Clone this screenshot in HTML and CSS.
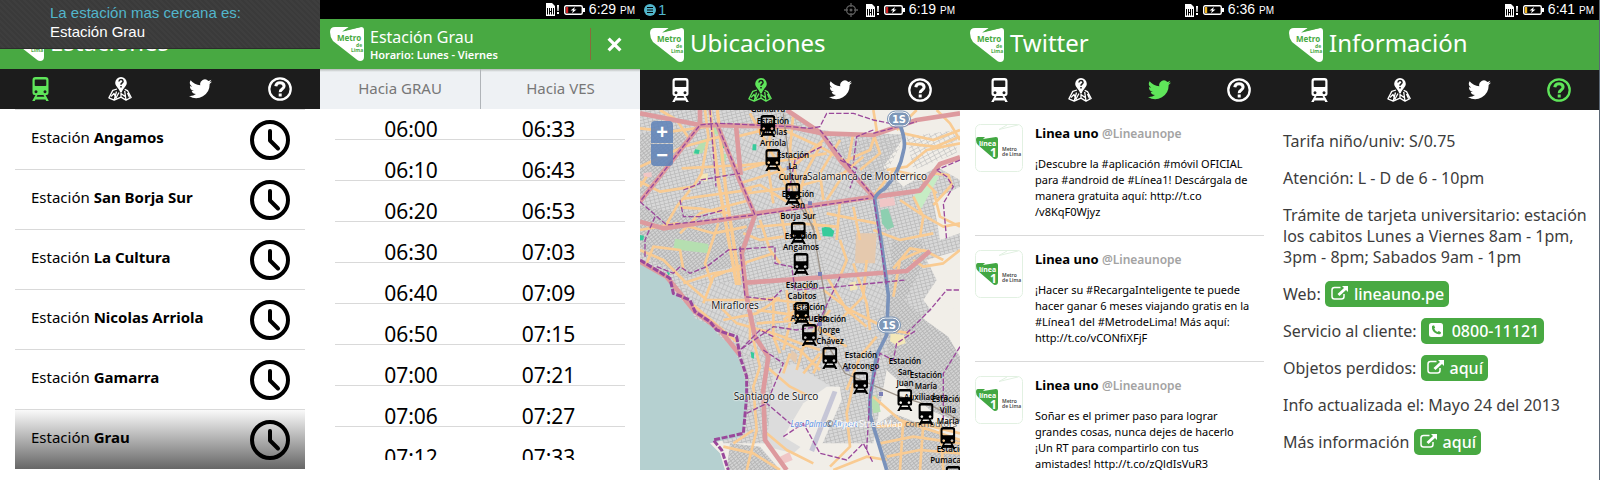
FILE: index.html
```html
<!DOCTYPE html>
<html lang="es">
<head>
<meta charset="utf-8">
<title>Metro de Lima</title>
<link rel="stylesheet" href="styles.css">
</head>
<body>
<svg class="defs" aria-hidden="true">
  <symbol id="train" viewBox="0 0 17 24">
    <path fill-rule="evenodd" d="M3.500 0h10a3 3 0 0 1 3 3v13a2 2 0 0 1-2 2h-1l3.300 6h-2.600l-.7-1.400h-10L2.800 24H.2l3.300-6h-1a2 2 0 0 1-2-2V3a3 3 0 0 1 3-3zM3.500 2.600q-.8 0-.8.8v4.800q0 .8.8.8h10q.8 0 .8-.8V3.400q0-.8-.8-.8zM4 13.300a1.500 1.500 0 1 0 .01 0zM13 13.300a1.500 1.500 0 1 0 .01 0zM5.500 18l-.9 1.700h7.800l-.9-1.700z"/>
  </symbol>
  <symbol id="place" viewBox="0 0 24 24">
    <path d="M13 0a5.800 5.800 0 0 0-5.800 5.800C7.200 9.400 10.500 10.500 12.300 15.500h1.400C15.500 10.500 18.800 9.400 18.800 5.800A5.800 5.800 0 0 0 13 0z"/>
    <path fill="none" stroke="#1c1c1c" stroke-width="1.500" d="M10.900 4.500q.2-1.900 2.100-1.900t2.100 1.700q0 1.100-1.100 1.700t-1 1.700M13 9v1.500"/>
    <path fill="none" stroke="currentColor" stroke-width="1.300" stroke-linejoin="round" d="M9 12L4.800 13.400.9 20.800l5.300 2.300 6.800-3 5 3 5.200-2.600-3.700-6.900-2.800-1.200M6.200 23l2.300-8.500M18 23l-1.300-9M3 19.500l3-3 2 4.500 3-5.500M13 20v-3.500l4 3M19.500 16l2 4.500"/>
  </symbol>
  <symbol id="bird" viewBox="0 0 24 20">
    <path d="M24 2.300a9.800 9.800 0 0 1-2.800.8A4.900 4.900 0 0 0 23.300.4a9.900 9.900 0 0 1-3.100 1.200 4.900 4.900 0 0 0-8.400 4.500A14 14 0 0 1 1.700.9a4.900 4.900 0 0 0 1.500 6.600 4.900 4.900 0 0 1-2.200-.6 4.900 4.900 0 0 0 3.900 4.900 4.900 4.900 0 0 1-2.200.1 4.900 4.900 0 0 0 4.600 3.400A9.900 9.900 0 0 1 0 17.300 14 14 0 0 0 21.500 4.900 10 10 0 0 0 24 2.300z"/>
  </symbol>
  <symbol id="help" viewBox="0 0 24 24">
    <g fill="none" stroke="currentColor"><circle cx="12" cy="12" r="10.700" stroke-width="2.300"/>
    <path stroke-width="3" d="M7.800 9.200Q8.200 5.800 12 5.800t4.100 3.200q0 1.900-2 3.100t-1.900 3M12.200 16.500v3"/></g>
  </symbol>
  <symbol id="clock" viewBox="0 0 40 40">
    <g fill="none" stroke="#000" stroke-width="4"><circle cx="20" cy="20" r="18"/><path stroke-linecap="round" stroke-linejoin="round" d="M20 11v9.500l8 8"/></g>
  </symbol>
  <symbol id="logo" viewBox="0 0 34 34">
    <path fill="#fff" d="M5 0H19L13 4 31 0q3 0 3 3V30q0 4-4 4-2 0-4-2L3 14Q0 10 0 5 0 0 5 0z"/>
    <path fill="#48a942" d="M19 0L12 4.800 31 0z"/>
    <text x="7" y="14" class="logo-name">Metro</text><text x="26" y="20" class="logo-sub">de</text><text x="21" y="25" class="logo-sub">Lima</text>
  </symbol>
  <symbol id="avatar" viewBox="0 0 48 48">
    <rect x=".5" y=".5" width="47" height="47" rx="5" fill="#fff" stroke="#e2f1e2"/>
    <path fill="none" stroke="#e2f1e2" d="M32 1l-8 4.500L43 1"/>
    <path fill="#42a742" d="M3 13h7l-2 2 13-2q2 0 2 2v17q0 3-3 3-1 0-2-1L3 21q-2-2-2-5 0-3 2-3z"/>
    <text x="4" y="22" class="avatar-line">línea</text><text x="15" y="33" class="avatar-one">1</text>
    <text x="27" y="27" class="avatar-text">Metro</text><text x="27" y="32" class="avatar-text">de Lima</text>
  </symbol>
  <symbol id="sim" viewBox="0 0 14 13">
    <path fill="#fff" d="M0 0h6l3 3v10H0z"/><path stroke="#000" fill="none" d="M1.500 5v6.500M3.500 5v6.500M5.500 5v6.500M7.500 5v6.500M3.500 8.500h2"/><path fill="#fff" d="M11 2h2l-.4 6h-1.200zM11 9h2v2h-2z"/>
  </symbol>
  <symbol id="battery" viewBox="0 0 21 10">
    <rect x=".7" y=".7" width="17.600" height="8.600" rx="1.500" fill="none" stroke="#fff" stroke-width="1.400"/><path fill="#fff" d="M19 3h2v4h-2zM11 2L6.500 5.500H9L8 8.200l4.500-3.700H10z"/><path fill="currentColor" d="M2 2h2.200v6H2z"/>
  </symbol>
  <symbol id="external" viewBox="0 0 17 14">
    <path fill="none" stroke="currentColor" stroke-width="1.500" d="M9.500 1.500H3.500q-2.500 0-2.500 2.500v6.500Q1 13 3.500 13h7q2.500 0 2.500-2.500V8"/><path d="M11 0h6v6l-2-2-6.500 6L6.500 8 13 2z"/>
  </symbol>
  <symbol id="phone" viewBox="0 0 14 14">
    <path fill-rule="evenodd" d="M2.500 0h9Q14 0 14 2.500v9q0 2.500-2.500 2.500h-9Q0 14 0 11.500v-9Q0 0 2.500 0zM3 3q-.5 4 2.500 6.500T11.500 11l.5-1.700-2.300-1.300-1 1Q6 8 5.200 5.500l1-.8L5 2.200z"/>
  </symbol>
</svg>

<main class="board">
  <section class="screen">
    <div class="toast" role="status"><span class="toast-title">La estación mas cercana es:</span><span>Estación Grau</span></div>
    <div class="statusbar statusbar-short"></div>
    <header class="header"><svg class="logo"><use href="#logo"/></svg><h1 class="title">Estaciones</h1></header>
    <nav class="nav">
      <a href="#estaciones" class="nav-link active" aria-label="Estaciones"><svg class="i-train"><use href="#train"/></svg></a>
      <a href="#mapa" class="nav-link" aria-label="Ubicaciones"><svg class="i-square"><use href="#place"/></svg></a>
      <a href="#twitter" class="nav-link" aria-label="Twitter"><svg class="i-bird"><use href="#bird"/></svg></a>
      <a href="#info" class="nav-link" aria-label="Información"><svg class="i-square"><use href="#help"/></svg></a>
    </nav>
    <ul class="stations">
      <li class="station"><span>Estación <b>Angamos</b></span><svg class="clock"><use href="#clock"/></svg></li>
      <li class="station"><span>Estación <b>San Borja Sur</b></span><svg class="clock"><use href="#clock"/></svg></li>
      <li class="station"><span>Estación <b>La Cultura</b></span><svg class="clock"><use href="#clock"/></svg></li>
      <li class="station"><span>Estación <b>Nicolas Arriola</b></span><svg class="clock"><use href="#clock"/></svg></li>
      <li class="station"><span>Estación <b>Gamarra</b></span><svg class="clock"><use href="#clock"/></svg></li>
      <li class="station pressed"><span>Estación <b>Grau</b></span><svg class="clock"><use href="#clock"/></svg></li>
    </ul>
  </section>

  <section class="screen">
    <div class="statusbar statusbar-short"><svg class="sim"><use href="#sim"/></svg><svg class="battery low"><use href="#battery"/></svg><span class="time">6:29 <small>PM</small></span></div>
    <header class="header"><svg class="logo"><use href="#logo"/></svg>
      <div class="heading"><h1 class="subtitle">Estación Grau</h1><p class="hours">Horario: Lunes - Viernes</p></div>
      <button class="close" aria-label="Cerrar"><svg class="cross" viewBox="0 0 14 14"><path d="M1.500 1.500l11 11M12.500 1.500l-11 11"/></svg></button>
    </header>
    <div class="tabs"><button class="tab">Hacia GRAU</button><button class="tab">Hacia VES</button></div>
    <div class="schedule">
      <table class="times">
        <tr><td>06:00</td><td>06:33</td></tr>
        <tr><td>06:10</td><td>06:43</td></tr>
        <tr><td>06:20</td><td>06:53</td></tr>
        <tr><td>06:30</td><td>07:03</td></tr>
        <tr><td>06:40</td><td>07:09</td></tr>
        <tr><td>06:50</td><td>07:15</td></tr>
        <tr><td>07:00</td><td>07:21</td></tr>
        <tr><td>07:06</td><td>07:27</td></tr>
        <tr><td>07:12</td><td>07:33</td></tr>
      </table>
    </div>
  </section>

  <section class="screen">
    <div class="statusbar">
      <span class="notice"><svg class="bubble" viewBox="0 0 12 12"><circle cx="6" cy="6" r="6" fill="#52b6cc"/><path stroke="#000" d="M3 3.500h6M3 6h6M3 8.500h6"/></svg>1</span>
      <svg class="gps" viewBox="0 0 14 14"><g fill="none" stroke="#5c5c5c" stroke-width="1.300"><circle cx="7" cy="7" r="4.500"/><path d="M7 0v4M7 10v4M0 7h4M10 7h4"/></g><circle cx="7" cy="7" r="1.500" fill="#5c5c5c"/></svg>
      <svg class="sim"><use href="#sim"/></svg><svg class="battery low"><use href="#battery"/></svg><span class="time">6:19 <small>PM</small></span></div>
    <header class="header"><svg class="logo"><use href="#logo"/></svg><h1 class="title">Ubicaciones</h1></header>
    <nav class="nav">
      <a href="#estaciones" class="nav-link" aria-label="Estaciones"><svg class="i-train"><use href="#train"/></svg></a>
      <a href="#mapa" class="nav-link active" aria-label="Ubicaciones"><svg class="i-square"><use href="#place"/></svg></a>
      <a href="#twitter" class="nav-link" aria-label="Twitter"><svg class="i-bird"><use href="#bird"/></svg></a>
      <a href="#info" class="nav-link" aria-label="Información"><svg class="i-square"><use href="#help"/></svg></a>
    </nav>
    <div class="map">
      <svg class="tiles" viewBox="0 330 960 1080" preserveAspectRatio="xMinYMin slice" aria-hidden="true">
        <defs>
          <pattern id="blocks-a" width="13" height="10" patternUnits="userSpaceOnUse" patternTransform="rotate(-14)"><rect width="13" height="10" fill="#d8d8d8"/><path d="M0 1h13M1 0v10" stroke="#bababa" stroke-width="2.500"/></pattern>
          <pattern id="blocks-b" width="12" height="15" patternUnits="userSpaceOnUse" patternTransform="rotate(24)"><rect width="12" height="15" fill="#d8d8d8"/><path d="M0 1h12M1 0v15" stroke="#bababa" stroke-width="2.500"/></pattern>
          <pattern id="blocks-c" width="11" height="8" patternUnits="userSpaceOnUse" patternTransform="rotate(-38)"><rect width="11" height="8" fill="#d3d3d3"/><path d="M0 1h11M1 0v8" stroke="#b6b6b6" stroke-width="3"/></pattern>
          <pattern id="blocks-d" width="16" height="11" patternUnits="userSpaceOnUse" patternTransform="rotate(-28)"><path d="M0 1h16M1 0v11" stroke="#bdbdbd" stroke-width="2"/></pattern>
        </defs>
        <path fill="#f1eee8" d="M0 330h960v1080H0z"/>
        <path fill="url(#blocks-a)" d="M0 330h440l100 60 160 10 260 10v480l-100 50-100 60-60 330H250L0 780z"/>
        <path fill="url(#blocks-b)" d="M240 380l310 20 150 190-350 50zM130 860l190-20 60 260-110-60zM540 720h180l20 220-160-60z"/>
        <path fill="url(#blocks-c)" d="M0 400l170-10L0 590zM755 720h90l10 60-60 120 60 60 70 50 35 60v200l-90-40-130-120 10-200zM0 620l340 50-30 120-180 40L0 760zM700 1280l60-40 200 80v90H740zM270 1330l90 10 60 70H260z"/>
        <path fill="#f1eee8" d="M540 330h200l-50 70-120 5zM800 400l80-40 80 60v120l-70-40-100 60-60-60zM860 780l100-30v170l-80 20-30-40 40-60zM880 600l80-40v140l-60 20z"/>
        <path fill="url(#blocks-d)" d="M570 440l180-30 30 30-70 130-70-30zM800 410l150-20v70l-130 50z"/>
        <path fill="#dcdcdc" d="M400 1110l60-20 130 80-40 110-90 80-80-20z"/>
        <path fill="#f1eee8" d="M560 1160h40l5 40-75 170-100-60 60-100z"/>
        <path fill="#e5c9ae" d="M648 700h62l-5 90h-60zM455 1050l18 15-6 25-17-15z"/>
        <path fill="#b5dfb0" d="M105 716l100 16 0 28-105-12zM160 455l30-38 12 2-14 40-28 6zM215 380l22 5-4 20-14-4zM240 460l20 2-4 22-16-2zM690 1190l20-5 12 50-22 5z"/>
        <path fill="#c6ecc4" d="M820 590l50-62 28 0-58 104z"/>
        <path fill="#8dcfb0" d="M722 630l22-5 18 55-20 10-16-20z"/>
        <path fill="#36cb9b" d="M545 684l20-6 18 16-5 16-30-2zM165 448l14 2-3 12-14-2zM242 425l14 4-4 16-12-4zM338 433l11 0v18h-12zM332 1055l10 3v18l-8-3zM80 815l10 3-4 10zM0 705l12 2-2 14-10 0z"/>
        <path fill="#f3e7b8" d="M752 1000l40 5 5 25-25 8-22-15zM628 848l20-4 5 24-22 4zM178 522l26-2-2 24-22-2z"/>
        <path fill="#f0c6c6" d="M718 598l44-6 4 24-46 6zM420 1370l28-14 10 24-30 12zM10 520l24-4 2 14-24 4z"/>
        <path fill="#b5d0d0" d="M0 790l90 55 10 35 50 40 15 35 45 20 30 35 40 30 20 50 10 30 15 50-5 50-10 60-10 30-90 20 30 30 15 50H0z"/>
        <path fill="#c6c6d6" d="M578 1172l14 4-70 180-14-6z"/>
        <g fill="none" stroke="#f9cb92" stroke-width="8" stroke-linejoin="round">
          <path stroke-width="10" d="M210 330l25 215 55 310M232 330l26 245 42 280"/>
          <path d="M0 545l60 30 100-15 25-40 20-110-10-80M125 505l185-10M125 597l210-28M120 622l60 4 90 14M310 510l80-25 20 15 30 60M300 570l60-15 80 50M70 690l40-70 40-50M235 670l-40 120 20 60M360 660l30 90 30 40M310 790l90-30M310 700l50 20 70-10M20 790l20-50 80 10 10 60"/>
          <path d="M60 330l50 30 40 60M0 385l90 10 150-20M0 500l130-60 110-30M0 560l20-30M120 700l60-60 150-40M0 690l110-20 110 30 100-20M330 340l60 110 70 120 50 80M290 410l120-30 130 60 70 40M280 500l160-20 120-20M300 550l160-50 90-80M320 580l150-20 140-40 60-50M400 350l-20 120 20 140M460 340l-10 110 30 130M545 430l-50 90-20 80M600 420l-60 100 10 80M640 400l-20 110-60 90M700 330l10 60-20 60-90 40M700 400l20 60-60 50M760 360l30 40 90 20 80-30M830 330l-60 60M890 330l40 40 30 50M795 430l90 10 75-30M740 510l60-10 60-50 100-20M700 590l60-80 80 20 50 50M820 590l30 60-10 60M780 600l60 40 70 40 50-10M880 570l20 80 60 30M880 520l45 5 10 30-55 60M640 620l20 100M600 600l-10 120M420 630l20 90M510 620l30 100M560 640l150 30M700 690l80 30 100-20M350 680l130-10 110 10"/>
          <path d="M0 750l70 30 60 60 70 60 120 0 100-5M190 910l30-80 100-40M130 850l90-30 95-15M230 910l60 60 110 30 80 30 60 20M250 960l100-20 60-40 80 10M160 915l130 110M330 900v120M350 930l150 20M350 970l140-10 70 40 60 40M400 890v120l20 50M440 870l10 100-20 80M500 850l-10 60-60 50M550 870l80 60 120 60 60 10M570 930l-60 80-30 50M600 830l20-50-20-60M560 830l60 100 60 50M640 790l40 120 10 80M680 780l-10 110-60 60M760 890l20-110 70-30 60 30M870 755l-60-10-50 60M820 780l30 20 60-10 50-40M400 1010l80 40 60 60M450 1060l-20 60M490 1040l-20 70M540 1060l-50 60M560 1040l-40 80M340 1020l20 80-20 60 10 130-30 120M380 1100l70 60 60 30M640 1150l-20 90 10 100-60 60M700 1190l80 70 180 60M710 1280l130-10 120 30M720 1330l100-20 140 20M740 1370l100-20 120 10M790 1260l-10 150M850 1270l-10 140M900 1270l10 140M380 1300l60 50 80 40M280 1330l60-40M250 1340l90 20 80 50M580 1410l100-40 60 10M710 1010l-50 60-40 100"/>
        </g>
        <g fill="none" stroke="#dd9a9e" stroke-width="14" stroke-linejoin="round">
          <path d="M0 340l180 35 270 5 95 20 155 5 130-45 130-20M0 605l180-230v-45M230 370l70 175 45 100M288 375l14 150M0 665l70 20 270-40M345 645l-40 115 15 130 25 120 40 60-15 100 5 150 65 90M350 640l340-48 150-20 60-80 60-20M440 330l105 70 55 80 105 115M320 848l280-20 200-15 70-60M0 785l80 45 85 105 75 55 60 75"/>
        </g>
        <g fill="none" stroke="#9d9389" stroke-width="4"><path d="M430 340l30 250 60 90 10 70 30 170-25 70 80 130 165 70 100 30 115 60M445 500l75 190"/></g>
        <g fill="none" stroke="#7992bb" stroke-width="11"><path d="M780 375q20 50 10 80-10 60-55 110-35 20-30 40l20 130 20 150-5 120-30 60-20 130v50l50 165"/></g>
        <g fill="none" stroke="#9a489b" stroke-width="4" stroke-dasharray="16 6">
          <path d="M0 605l80 70 265-30-115-275-50 5L0 605M120 600l10 50h50l70-20M130 570l50-20v-10l120-20M350 645l335-50M210 330l18 230M240 370l210 10 60 5 30-5 20-40h80l60 20 50 10M540 390l80 100 80 100 20 130 20 140M600 480l50 25-20 60M545 440l-80 40-20 100M700 390l-50 20-10 80M960 480l-70 30M890 510l30 20 20 30-30 50 10 110M15 770l0-50 30-70M50 800l50 20 20-20 30 20 50-20 65-50 140-10v50l50 10 10 70 130-10 200-20M600 830l-70 150-60 10-70-10-100 70M300 740l15 150 80 10 30-30M400 1010l-40-20-60 60M370 1050l60 40-50 120 70 60 60 10M320 1240l60-30M430 1310l60-40 50 90 80 20 50-50 30 60M680 1350l10-170 30-120 40 20 10-50 60-40M800 1000l70-70 50-60 40 0M960 1040l-50 80 0 140M700 400l130-35"/>
        </g>
        <path fill="none" stroke="#9a489b" stroke-width="9" stroke-dasharray="18 5" d="M0 780l90 55 10 45 50 20 15 35 45 30 20 25 60 20 10 60 20 60v60l-10 110-90 20 25 30 20 60"/>
        <g fill="#7b80b8"><path d="M440 498h12v12h-12zM504 604h12v12h-12zM534 816h12v12h-12zM534 966h12v12h-12zM616 1102h12v12h-12zM717 1176h12v12h-12z"/></g>
      </svg>
      <span class="place" style="left:227px;top:66px">Salamanca de Monterrico</span>
      <span class="place" style="left:95px;top:195px">Miraflores</span>
      <span class="place" style="left:136px;top:286px">Santiago de Surco</span>
      <span class="place airport" style="left:184px;top:314px">Las Palmas Airport</span>
      <span class="shield" style="left:259px;top:9px">1S</span>
      <span class="shield" style="left:249px;top:215px">1S</span>
      <small class="credit">© <a href="#osm">OpenStreetMap</a> contributors</small>
      <div class="pin" style="left:128px;top:27px">Estación<br>Gamarra<svg class="marker"><use href="#train"/></svg></div>
      <div class="pin" style="left:133px;top:61px">Estación<br>Nicolas<br>Arriola<svg class="marker"><use href="#train"/></svg></div>
      <div class="pin" style="left:153px;top:95px">Estación<br>La<br>Cultura<svg class="marker"><use href="#train"/></svg></div>
      <div class="pin" style="left:158px;top:134px">Estación<br>San<br>Borja Sur<svg class="marker"><use href="#train"/></svg></div>
      <div class="pin" style="left:161px;top:165px">Estación<br>Angamos<svg class="marker"><use href="#train"/></svg></div>
      <div class="pin" style="left:162px;top:214px">Estación<br>Cabitos<svg class="marker"><use href="#train"/></svg></div>
      <div class="pin" style="left:169px;top:236px">Estación<br>Ayacucho<svg class="marker"><use href="#train"/></svg></div>
      <div class="pin" style="left:190px;top:259px">Estación<br>Jorge<br>Chávez<svg class="marker"><use href="#train"/></svg></div>
      <div class="pin" style="left:221px;top:284px">Estación<br>Atocongo<svg class="marker"><use href="#train"/></svg></div>
      <div class="pin" style="left:265px;top:301px">Estación<br>San<br>Juan<svg class="marker"><use href="#train"/></svg></div>
      <div class="pin" style="left:286px;top:315px">Estación<br>María<br>Auxiliadora<svg class="marker"><use href="#train"/></svg></div>
      <div class="pin" style="left:308px;top:339px">Estación<br>Villa<br>María<svg class="marker"><use href="#train"/></svg></div>
      <div class="pin" style="left:313px;top:378px">Estación<br>Pumacahua<svg class="marker"><use href="#train"/></svg></div>
      <div class="zoom"><button class="zoom-button" aria-label="Acercar">+</button><button class="zoom-button" aria-label="Alejar">−</button></div>
    </div>
  </section>

  <section class="screen">
    <div class="statusbar"><svg class="sim"><use href="#sim"/></svg><svg class="battery"><use href="#battery"/></svg><span class="time">6:36 <small>PM</small></span></div>
    <header class="header"><svg class="logo"><use href="#logo"/></svg><h1 class="title">Twitter</h1></header>
    <nav class="nav">
      <a href="#estaciones" class="nav-link" aria-label="Estaciones"><svg class="i-train"><use href="#train"/></svg></a>
      <a href="#mapa" class="nav-link" aria-label="Ubicaciones"><svg class="i-square"><use href="#place"/></svg></a>
      <a href="#twitter" class="nav-link active" aria-label="Twitter"><svg class="i-bird"><use href="#bird"/></svg></a>
      <a href="#info" class="nav-link" aria-label="Información"><svg class="i-square"><use href="#help"/></svg></a>
    </nav>
    <div class="feed">
      <article class="tweet"><svg class="avatar"><use href="#avatar"/></svg><div><h2 class="author">Linea uno <span class="handle">@Lineaunope</span></h2>
        <p class="message">¡Descubre la #aplicación #móvil OFICIAL<br>para #android de #Línea1! Descárgala de<br>manera gratuita aquí: http://t.co<br>/v8KqF0Wjyz</p></div></article>
      <article class="tweet"><svg class="avatar"><use href="#avatar"/></svg><div><h2 class="author">Linea uno <span class="handle">@Lineaunope</span></h2>
        <p class="message">¡Hacer su #RecargaInteligente te puede<br>hacer ganar 6 meses viajando gratis en la<br>#Línea1 del #MetrodeLima! Más aquí:<br>http://t.co/vCONfiXFjF</p></div></article>
      <article class="tweet"><svg class="avatar"><use href="#avatar"/></svg><div><h2 class="author">Linea uno <span class="handle">@Lineaunope</span></h2>
        <p class="message">Soñar es el primer paso para lograr<br>grandes cosas, nunca dejes de hacerlo<br>¡Un RT para compartirlo con tus<br>amistades! http://t.co/zQldIsVuR3</p></div></article>
    </div>
  </section>

  <section class="screen screen-last">
    <div class="statusbar"><svg class="sim"><use href="#sim"/></svg><svg class="battery"><use href="#battery"/></svg><span class="time">6:41 <small>PM</small></span></div>
    <header class="header"><svg class="logo"><use href="#logo"/></svg><h1 class="title">Información</h1></header>
    <nav class="nav">
      <a href="#estaciones" class="nav-link" aria-label="Estaciones"><svg class="i-train"><use href="#train"/></svg></a>
      <a href="#mapa" class="nav-link" aria-label="Ubicaciones"><svg class="i-square"><use href="#place"/></svg></a>
      <a href="#twitter" class="nav-link" aria-label="Twitter"><svg class="i-bird"><use href="#bird"/></svg></a>
      <a href="#info" class="nav-link active" aria-label="Información"><svg class="i-square"><use href="#help"/></svg></a>
    </nav>
    <div class="info">
      <p>Tarifa niño/univ: S/0.75</p>
      <p>Atención: L - D de 6 - 10pm</p>
      <p>Trámite de tarjeta universitario: estación<br>los cabitos Lunes a Viernes 8am - 1pm,<br>3pm - 8pm; Sabados 9am - 1pm</p>
      <p>Web: <a class="pill" href="#web"><svg class="i-external"><use href="#external"/></svg>lineauno.pe</a></p>
      <p>Servicio al cliente: <a class="pill" href="#tel"><svg class="i-phone"><use href="#phone"/></svg>0800-11121</a></p>
      <p>Objetos perdidos: <a class="pill" href="#objetos"><svg class="i-external"><use href="#external"/></svg>aquí</a></p>
      <p>Info actualizada el: Mayo 24 del 2013</p>
      <p>Más información <a class="pill" href="#mas"><svg class="i-external"><use href="#external"/></svg>aquí</a></p>
    </div>
  </section>
</main>
</body>
</html>
```

FILE: styles.css
```css
* { box-sizing: border-box; }
body { margin: 0; background: #fff; color: #000; font-family: "Noto Sans", "Open Sans", sans-serif; }
h1, h2, p, ul { margin: 0; padding: 0; font-weight: 400; }
button { font: inherit; border: 0; padding: 0; margin: 0; background: none; color: inherit; }
a { color: inherit; text-decoration: none; }
svg { flex: none; fill: currentColor; }
.defs { position: absolute; width: 0; height: 0; }

.board { display: grid; grid-template-columns: 320fr 320fr 320fr 319fr 321fr; }
.screen { position: relative; min-width: 0; overflow: hidden; background: #fff; }
.screen-last { border-right: 1px solid #5b6775; min-height: 480px; }

.statusbar { display: flex; align-items: center; height: 20px; padding: 0 5px 0 4px; gap: 4px; justify-content: flex-end; background: #000; color: #fff; font-family: "Liberation Sans", Arial, sans-serif; }
.statusbar-short { height: 19px; }
.sim { width: 14px; height: 13px; }
.battery { width: 21px; height: 10px; color: #f5b91f; }
.battery.low { color: #d11f1f; }
.time { font-size: 14px; line-height: 18px; }
.time small { font-size: 10px; }
.notice { display: flex; align-items: center; gap: 2px; margin-right: auto; color: #52b6cc; font-size: 15px; line-height: 18px; }
.bubble { width: 12px; height: 12px; }
.gps { width: 14px; height: 14px; margin-right: 4px; }

.toast { position: absolute; top: 0; left: 0; right: 0; z-index: 2; display: flex; flex-direction: column; height: 49px; padding: 3px 0 0 50px; background: repeating-linear-gradient(45deg, #3a3a3a 0 2px, #3e3e3e 2px 4px); border-bottom: 1px solid #2c2c2c; color: #fff; font: 15px/19px "Liberation Sans", Arial, sans-serif; }
.toast-title { color: #52b6cc; }

.header { display: flex; align-items: center; height: 50px; padding-left: 10px; gap: 6px; background: #48a942; color: #fff; }
.logo { width: 34px; height: 34px; }
.logo-name { font: 700 8px "Noto Sans", sans-serif; fill: #48a942; }
.logo-sub { font: 700 5px "Noto Sans", sans-serif; fill: #48a942; }
.title { font-size: 24px; line-height: 32px; padding-bottom: 5px; }
.heading { flex: 1; padding-top: 2px; }
.subtitle { font-size: 16px; line-height: 20px; }
.hours { font-size: 11px; line-height: 16px; font-weight: 600; }
.close { display: flex; align-items: center; justify-content: center; width: 50px; height: 32px; padding-right: 2px; border-left: 1px solid #8a6a3c; }
.cross { width: 15px; height: 15px; fill: none; stroke: #fff; stroke-width: 3; }

.nav { display: grid; grid-template-columns: repeat(4, 1fr); height: 40px; padding-bottom: 1px; background: #1c1c1c; color: #fff; }
.nav-link { display: flex; align-items: center; justify-content: center; }
.nav-link.active { color: #5fe55a; }
.i-train { width: 17px; height: 24px; }
.i-square { width: 24px; height: 24px; }
.i-bird { width: 23px; height: 20px; }

.stations { list-style: none; padding: 0 15px; font-size: 15px; line-height: 20px; }
.station { display: flex; align-items: center; justify-content: space-between; height: 60px; padding: 0 15px 0 16px; border-top: 1px solid #d9d9d9; }
.station span { padding-bottom: 6px; }
.clock { width: 40px; height: 40px; }
.pressed { background: linear-gradient(#fafafa, #666); }

.tabs { display: grid; grid-template-columns: 1fr 1fr; height: 40px; background: linear-gradient(#b5bab8, #eef1f4 3px); color: #777; font-size: 15px; line-height: 20px; }
.tab { padding-bottom: 2px; }
.tab + .tab { border-left: 1px solid #b0b4b8; }
.schedule { height: 351px; padding: 0 15px; overflow: hidden; }
.times { width: 100%; border-collapse: collapse; table-layout: fixed; font-size: 21px; line-height: 20px; text-align: center; }
.times td { height: 41px; padding: 0 0 0 7px; vertical-align: bottom; border-bottom: 1px solid #d9d9d9; }
.times td + td { padding: 0 8px 0 0; }
.times tr:first-child td { height: 30px; }

.map { position: relative; height: 360px; overflow: hidden; }
.tiles { display: block; width: 100%; height: 100%; }
.place { position: absolute; transform: translate(-50%, -50%); white-space: nowrap; font: 10px/12px "Noto Sans", sans-serif; color: #222; text-shadow: 0 0 2px #fff, 0 0 2px #fff, 0 0 1px #fff; }
.airport { font-size: 8px; font-style: italic; color: #5b8fe0; }
.shield { position: absolute; transform: translate(-50%, -50%); width: 22px; border: 1px solid #fff; border-radius: 8px; outline: 1px solid #7d97b8; background: #7d97b8; color: #fff; font: 700 10px/13px "DejaVu Sans", sans-serif; text-align: center; }
.credit { position: absolute; right: 3px; bottom: 40px; font: 9px/12px "Open Sans", sans-serif; color: #555; }
.credit a { color: #fff; }
.pin { position: absolute; transform: translate(-50%, -100%); display: block; white-space: nowrap; text-align: center; font: 600 8px/11px "Open Sans", sans-serif; }
.marker { display: block; width: 16px; height: 22px; margin: 1px auto 0; }
.zoom { position: absolute; left: 11px; top: 11px; display: grid; gap: 1px; }
.zoom-button { width: 22px; height: 22px; background: #6184b8e0; border-radius: 4px 4px 0 0; color: #fff; font: 700 20px/20px "Liberation Sans", sans-serif; }
.zoom-button + .zoom-button { border-radius: 0 0 4px 4px; }

.feed { height: 360px; padding: 0 15px; overflow: hidden; }
.tweet { display: flex; gap: 12px; padding: 14px 0 15px; border-bottom: 1px solid #d9d9d9; }
.avatar { width: 48px; height: 48px; }
.avatar-line { font: 700 7px "Noto Sans", sans-serif; fill: #fff; }
.avatar-one { font: 700 12px "Noto Sans", sans-serif; fill: #fff; }
.avatar-text { font: 600 5px "Noto Sans", sans-serif; fill: #444; }
.author { font-size: 13px; line-height: 18px; font-weight: 700; }
.handle { font-size: 12px; line-height: 12px; color: #a3a3a3; font-weight: 600; }
.message { margin-top: 14px; font-size: 11px; line-height: 16px; white-space: nowrap; }

.info { display: grid; gap: 16px; padding: 21px 4px 0; color: #3c3c3c; font-size: 16px; line-height: 21px; white-space: nowrap; }
.pill { padding: 2px 5px 2px 6px; border-radius: 5px; background: #48a942; color: #fff; font-weight: 500; }
.i-external { width: 17px; height: 14px; margin-right: 6px; }
.i-phone { width: 14px; height: 14px; margin: 0 9px 0 2px; }
```
